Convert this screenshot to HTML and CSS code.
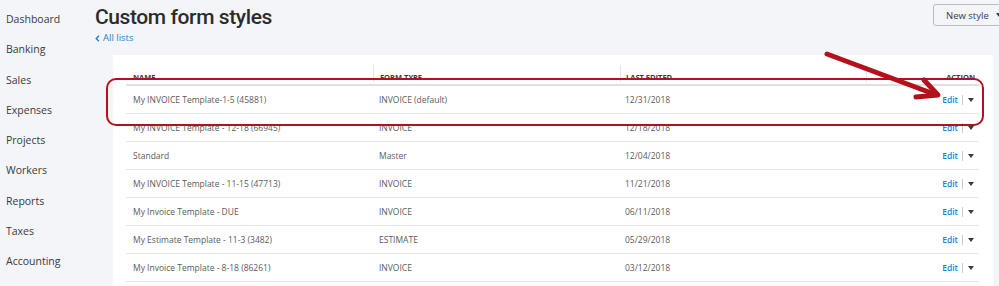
FILE: index.html
```html
<!DOCTYPE html>
<html lang="en">
<head>
    <meta charset="UTF-8">
    <meta name="viewport" content="width=device-width, initial-scale=1.0">
    <title>Custom form styles</title>
    <link rel="stylesheet" href="styles.css">
</head>
<body>
    <div class="app">
        <nav class="sidebar">
            <div class="nav-item">Dashboard</div>
            <div class="nav-item">Banking</div>
            <div class="nav-item">Sales</div>
            <div class="nav-item">Expenses</div>
            <div class="nav-item">Projects</div>
            <div class="nav-item">Workers</div>
            <div class="nav-item">Reports</div>
            <div class="nav-item">Taxes</div>
            <div class="nav-item">Accounting</div>
        </nav>

        <main class="main">
            <header class="page-header">
                <div>
                    <h1 class="title">Custom form styles</h1>
                    <a class="back-link" href="#">
                        <svg class="chev" width="5" height="7" viewBox="0 0 5 7"><polyline points="4,0.8 1.2,3.5 4,6.2" fill="none" stroke="#1a84d0" stroke-width="1.4"/></svg>
                        All lists
                    </a>
                </div>
                <button class="new-style">New style <span class="caret"></span></button>
            </header>

            <section class="card">
                <div class="table">
                    <div class="row head">
                        <div class="cell c-name">NAME</div>
                        <div class="cell c-type">FORM TYPE</div>
                        <div class="cell c-date">LAST EDITED</div>
                        <div class="cell c-action">ACTION</div>
                    </div>
                    <div class="row">
                        <div class="cell c-name">My INVOICE Template-1-5 (45881)</div>
                        <div class="cell c-type">INVOICE (default)</div>
                        <div class="cell c-date">12/31/2018</div>
                        <div class="cell c-action"><a class="edit" href="#">Edit</a><span class="sep"></span><span class="caret"></span></div>
                    </div>
                    <div class="row">
                        <div class="cell c-name">My INVOICE Template - 12-18 (66945)</div>
                        <div class="cell c-type">INVOICE</div>
                        <div class="cell c-date">12/18/2018</div>
                        <div class="cell c-action"><a class="edit" href="#">Edit</a><span class="sep"></span><span class="caret"></span></div>
                    </div>
                    <div class="row">
                        <div class="cell c-name">Standard</div>
                        <div class="cell c-type">Master</div>
                        <div class="cell c-date">12/04/2018</div>
                        <div class="cell c-action"><a class="edit" href="#">Edit</a><span class="sep"></span><span class="caret"></span></div>
                    </div>
                    <div class="row">
                        <div class="cell c-name">My INVOICE Template - 11-15 (47713)</div>
                        <div class="cell c-type">INVOICE</div>
                        <div class="cell c-date">11/21/2018</div>
                        <div class="cell c-action"><a class="edit" href="#">Edit</a><span class="sep"></span><span class="caret"></span></div>
                    </div>
                    <div class="row">
                        <div class="cell c-name">My Invoice Template - DUE</div>
                        <div class="cell c-type">INVOICE</div>
                        <div class="cell c-date">06/11/2018</div>
                        <div class="cell c-action"><a class="edit" href="#">Edit</a><span class="sep"></span><span class="caret"></span></div>
                    </div>
                    <div class="row">
                        <div class="cell c-name">My Estimate Template - 11-3 (3482)</div>
                        <div class="cell c-type">ESTIMATE</div>
                        <div class="cell c-date">05/29/2018</div>
                        <div class="cell c-action"><a class="edit" href="#">Edit</a><span class="sep"></span><span class="caret"></span></div>
                    </div>
                    <div class="row">
                        <div class="cell c-name">My Invoice Template - 8-18 (86261)</div>
                        <div class="cell c-type">INVOICE</div>
                        <div class="cell c-date">03/12/2018</div>
                        <div class="cell c-action"><a class="edit" href="#">Edit</a><span class="sep"></span><span class="caret"></span></div>
                    </div>
                </div>
            </section>
        </main>
    </div>

    <!-- annotation drawn over the screenshot -->
    <svg class="annotation" width="999" height="286" viewBox="0 0 999 286">
        <rect x="107" y="79" width="876" height="46" rx="9" ry="9" fill="none" stroke="#b3121c" stroke-width="2"/>
        <line x1="827" y1="54" x2="934" y2="94" stroke="#b3121c" stroke-width="5" stroke-linecap="round"/>
        <polyline points="924,80 938,95 916,97" fill="none" stroke="#b3121c" stroke-width="5" stroke-linecap="round" stroke-linejoin="round"/>
    </svg>
</body>
</html>
```

FILE: styles.css
```css
body, html {
    margin: 0;
    padding: 0;
    font-family: "Open Sans", Arial, sans-serif;
    background-color: #f4f5f8;
    color: #393a3d;
    overflow: hidden;
}

.app {
    display: flex;
    height: 286px;
}

.sidebar {
    width: 95px;
    flex-shrink: 0;
    padding-top: 4px;
}

.nav-item {
    height: 30.25px;
    line-height: 30px;
    padding-left: 6px;
    font-size: 10.5px;
    color: #393a3d;
}

.main {
    flex: 1;
    display: flex;
    flex-direction: column;
    min-width: 0;
}

.page-header {
    display: flex;
    justify-content: space-between;
    align-items: flex-start;
    height: 55px;
}

.title {
    margin: 5px 0 0;
    font-family: Roboto, Arial, sans-serif;
    font-size: 21px;
    font-weight: 500;
    line-height: 25px;
    color: #2b2b2e;
    letter-spacing: -0.4px;
}

.back-link {
    display: flex;
    align-items: center;
    gap: 3px;
    margin-top: 2px;
    font-size: 9.5px;
    color: #1a84d0;
    text-decoration: none;
    line-height: 12px;
}

.new-style {
    margin-top: 4px;
    margin-right: -12px;
    width: 78px;
    height: 22px;
    border: 1px solid #b9bcc2;
    border-radius: 3px;
    background: #f4f5f8;
    font-family: "Open Sans", Arial, sans-serif;
    font-size: 9.5px;
    color: #393a3d;
    padding: 0 0 0 12px;
    text-align: left;
    display: flex;
    align-items: center;
    gap: 7px;
}

.caret {
    display: inline-block;
    width: 0;
    height: 0;
    border-left: 3.5px solid transparent;
    border-right: 3.5px solid transparent;
    border-top: 4px solid #393a3d;
}

.card {
    flex: 1;
    margin-left: 18px;
    margin-right: 6px;
    background: #ffffff;
    padding: 10px 14px 0 13px;
}

.row {
    display: flex;
    height: 28px;
    align-items: center;
    border-bottom: 1px solid #e4e6e9;
    box-sizing: border-box;
    font-size: 8.5px;
    color: #5a5b60;
}

.row.head {
    height: 21px;
    align-items: flex-end;
    border-bottom: 2px solid #dcdfe3;
    font-size: 7.5px;
    font-weight: bold;
    color: #393a3d;
    padding-bottom: 2px;
}

.cell {
    white-space: nowrap;
}

.c-name {
    width: 247px;
    padding-left: 7px;
    box-sizing: border-box;
}

.c-type {
    width: 247px;
    padding-left: 6px;
    box-sizing: border-box;
}

.c-date {
    width: 246px;
    padding-left: 5px;
    box-sizing: border-box;
}

.c-action {
    flex: 1;
    display: flex;
    justify-content: flex-end;
    align-items: center;
    padding-right: 5px;
}

.row.head .c-type,
.row.head .c-date,
.row.head .c-action {
    border-left: 1px solid #e4e6e9;
    align-self: stretch;
    display: flex;
    align-items: flex-end;
}

.row.head .c-action {
    justify-content: flex-end;
    padding-right: 4px;
}

.edit {
    color: #1a84d0;
    font-weight: 600;
    text-decoration: none;
}

.sep {
    display: inline-block;
    width: 1px;
    height: 10px;
    background: #c9ccd1;
    margin: 0 5px 0 4px;
}

.annotation {
    position: absolute;
    left: 0;
    top: 0;
    pointer-events: none;
}
```
